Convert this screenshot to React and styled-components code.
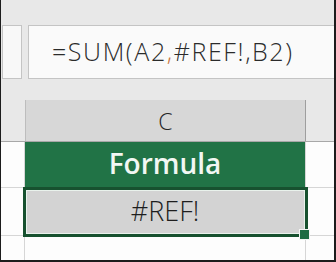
import React from 'react';
import styled, { createGlobalStyle } from 'styled-components';

const GlobalStyle = createGlobalStyle`
  html, body {
    margin: 0;
    padding: 0;
    background: #ffffff;
  }
`;

const Frame = styled.div`
  width: 336px;
  height: 262px;
  box-sizing: border-box;
  border-left: 1px solid #1c1c1c;
  border-right: 2px solid #1c1c1c;
  border-bottom: 2px solid #1c1c1c;
  background: #fdfdfd;
  display: flex;
  flex-direction: column;
  overflow: hidden;
  font-family: "Open Sans", "Noto Sans", sans-serif;

  & > * {
    flex-shrink: 0;
  }
`;

const Ribbon = styled.div`
  background: #e8e8e8;
  padding: 25px 0 21px 1px;
`;

const FormulaRow = styled.div`
  display: flex;
  gap: 6px;
  height: 54px;
`;

const NameBox = styled.div`
  width: 20px;
  box-sizing: border-box;
  background: #f8f8f8;
  border: 1px solid #c4c4c4;
`;

const FormulaBox = styled.div`
  flex: 1;
  box-sizing: border-box;
  background: #fafafa;
  border: 1px solid #c4c4c4;
  border-right: none;
  display: flex;
  align-items: center;
  padding-left: 23px;
  padding-bottom: 2px;
  font-size: 25px;
  font-weight: 300;
  color: #2b2b2b;
  letter-spacing: 1.6px;
  white-space: nowrap;
`;

const Ref = styled.span`
  color: ${p => p.$color};
`;

const Grid = styled.div`
  display: grid;
  grid-template-columns: 24px 281px 1fr;
`;

const HeaderRow = styled(Grid)`
  height: 41px;
  background: #e8e8e8;
  border-bottom: 1px solid #a8a8a8;
`;

const ColumnHeader = styled.div`
  background: #d7d7d7;
  border-left: 1px solid #bdbdbd;
  border-right: 1px solid #9e9e9e;
  display: flex;
  align-items: center;
  justify-content: center;
  font-size: 23px;
  font-weight: 300;
  color: #262626;
`;

const Row = styled(Grid)`
  position: relative;
  height: ${p => p.$height}px;
  border-bottom: 1px solid #d6d6d6;
`;

const LastRow = styled(Grid)`
  flex: 1 1 auto;
`;

const Gutter = styled.div`
  border-right: 1px solid #d6d6d6;
`;

const Cell = styled.div`
  background: ${p => p.$bg};
  color: ${p => p.$color};
  border-right: 1px solid #d6d6d6;
  display: flex;
  align-items: center;
  justify-content: center;
  font-size: ${p => p.$size}px;
  font-weight: ${p => p.$weight};
  padding-bottom: 3px;
`;

const Selection = styled.div`
  position: absolute;
  left: 22px;
  top: -1px;
  width: 285px;
  height: 50px;
  box-sizing: border-box;
  border: 3px solid #17512f;
  box-shadow: inset 0 0 0 1px #e9f2ec;
  pointer-events: none;
`;

const FillHandle = styled.div`
  position: absolute;
  left: 298px;
  top: 41px;
  width: 11px;
  height: 11px;
  box-sizing: border-box;
  background: #1e6b43;
  border: 1px solid #f4f4f4;
`;

export default function App() {
  return (
    <>
      <GlobalStyle />
      <Frame>
        <Ribbon>
          <FormulaRow>
            <NameBox />
            <FormulaBox>
              =SUM(A2<Ref $color="#c8743a">,</Ref>#REF!,B2)
            </FormulaBox>
          </FormulaRow>
        </Ribbon>
        <HeaderRow>
          <div />
          <ColumnHeader>C</ColumnHeader>
          <div />
        </HeaderRow>
        <Row $height={45}>
          <Gutter />
          <Cell $bg="#217346" $color="#f2f7f3" $size={28} $weight={600}>Formula</Cell>
          <div />
        </Row>
        <Row $height={47}>
          <Gutter />
          <Cell $bg="#d3d3d3" $color="#1e1e1e" $size={27} $weight={300}>#REF!</Cell>
          <div />
          <Selection />
          <FillHandle />
        </Row>
        <LastRow>
          <Gutter />
          <Cell $bg="transparent" />
          <div />
        </LastRow>
      </Frame>
    </>
  );
}
